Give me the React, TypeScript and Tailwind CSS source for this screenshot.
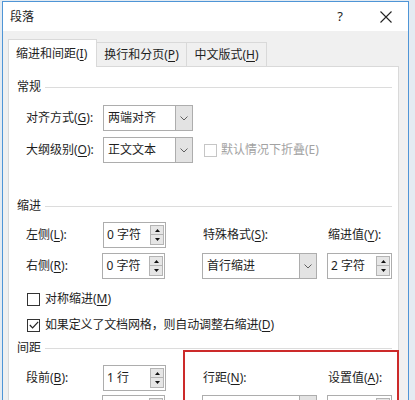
import type { ReactNode } from "react";

const font = "font-['Noto_Sans','Noto_Sans_CJK_SC',sans-serif]";

function Mn({ children }: { children: ReactNode }) {
  return <span className="underline underline-offset-2 decoration-1">{children}</span>;
}

function Heading({ text }: { text: string }) {
  return (
    <div className="flex items-center h-4 gap-[4px]">
      <span className="text-[12px] leading-4 text-[#1e1e1e]">{text}</span>
      <div className="flex-1 border-t border-[#dcdcdc]" />
    </div>
  );
}

function Select({ value, w }: { value: string; w: string }) {
  return (
    <div className={`flex h-[26px] ${w} border border-[#adadad] bg-white`}>
      <div className="flex-1 flex items-center pl-[4px] text-[12px] text-[#1e1e1e]">{value}</div>
      <div className="w-[17px] border-l border-[#adadad] bg-[#e3e3e3] flex items-center justify-center">
        <svg width="8" height="5" viewBox="0 0 8 5">
          <path d="M0.5 0.5 L4 4 L7.5 0.5" fill="none" stroke="#606060" strokeWidth="1" />
        </svg>
      </div>
    </div>
  );
}

function Spinner({ value, w }: { value: string; w: string }) {
  return (
    <div className={`flex h-[26px] ${w} border border-[#adadad] bg-white`}>
      <div className="flex-1 flex items-center pl-[3px] text-[12px] text-[#1e1e1e]">{value}</div>
      <div className="w-[15px] flex flex-col justify-center pr-[1px]">
        <div className="h-[10px] border border-[#b4b4b4] bg-[#e6e6e6] flex items-center justify-center">
          <svg width="5" height="3" viewBox="0 0 5 3"><path d="M0 3 L2.5 0 L5 3 Z" fill="#111" /></svg>
        </div>
        <div className="h-[10px] border border-t-0 border-[#b4b4b4] bg-[#e6e6e6] flex items-center justify-center">
          <svg width="5" height="3" viewBox="0 0 5 3"><path d="M0 0 L2.5 3 L5 0 Z" fill="#111" /></svg>
        </div>
      </div>
    </div>
  );
}

function Check({ checked, disabled }: { checked?: boolean; disabled?: boolean }) {
  return (
    <div
      className={`w-[13px] h-[13px] border bg-white flex items-center justify-center ${
        disabled ? "border-[#c6c6c6]" : "border-[#333333]"
      }`}
    >
      {checked && (
        <svg width="10" height="8" viewBox="0 0 10 8">
          <path d="M0.8 4 L3.6 6.8 L9.2 0.8" fill="none" stroke="#222" strokeWidth="1.2" />
        </svg>
      )}
    </div>
  );
}

export default function App() {
  return (
    <div className={`w-[415px] h-[400px] overflow-hidden bg-[#e4ebf2] pt-[1px] ${font}`}>
      <div className="ml-[2px] w-[407px] h-[420px] border border-[#4f95d6] bg-[#f0f0f0]">
        {/* title bar */}
        <div className="h-[29px] bg-white flex items-center pl-[7px] pr-[16px] text-[12px] text-[#1e1e1e]">
          <span>段落</span>
          <span className="ml-auto mr-[37px] text-[13px]">?</span>
          <svg width="12" height="12" viewBox="0 0 12 12">
            <path d="M0.5 0.5 L11.5 11.5 M11.5 0.5 L0.5 11.5" stroke="#222" strokeWidth="1.1" />
          </svg>
        </div>

        <div className="px-[5px] pt-[8px]">
          {/* tabs */}
          <div className="flex items-end relative z-10 -mb-px text-[12px] text-[#1e1e1e]">
            <div className="h-[28px] w-[89px] bg-white border border-b-0 border-[#d9d9d9] flex items-center pl-[7px]">
              缩进和间距(<Mn>I</Mn>)
            </div>
            <div className="h-[25px] w-[90px] border border-l-0 border-[#d9d9d9] flex items-center justify-center">
              换行和分页(<Mn>P</Mn>)
            </div>
            <div className="h-[25px] w-[80px] border border-l-0 border-[#d9d9d9] flex items-center justify-center">
              中文版式(<Mn>H</Mn>)
            </div>
          </div>

          {/* panel */}
          <div className="relative w-[391px] h-[360px] bg-white border border-[#d9d9d9] pl-[8px] pr-[6px] text-[12px] text-[#1e1e1e]">
            <div className="pt-[12px]">
              <Heading text="常规" />
            </div>
            <div className="ml-[9px] mt-[10px] flex items-center">
              <span className="w-[77px]">对齐方式(<Mn>G</Mn>):</span>
              <Select value="两端对齐" w="w-[90px]" />
            </div>
            <div className="ml-[9px] mt-[6px] flex items-center">
              <span className="w-[77px]">大纲级别(<Mn>O</Mn>):</span>
              <Select value="正文文本" w="w-[90px]" />
              <div className="ml-[11px] flex items-center gap-[4px] text-[#a2a2a2]">
                <Check disabled />
                <span>默认情况下折叠(E)</span>
              </div>
            </div>

            <div className="mt-[35px]">
              <Heading text="缩进" />
            </div>
            <div className="ml-[9px] mt-[8px] flex items-center">
              <span className="w-[77px]">左侧(<Mn>L</Mn>):</span>
              <Spinner value="0 字符" w="w-[63px]" />
              <span className="ml-[37px] w-[125px]">特殊格式(<Mn>S</Mn>):</span>
              <span>缩进值(<Mn>Y</Mn>):</span>
            </div>
            <div className="ml-[9px] mt-[5px] flex items-center">
              <span className="w-[77px]">右侧(<Mn>R</Mn>):</span>
              <Spinner value="0 字符" w="w-[63px]" />
              <div className="ml-[37px]">
                <Select value="首行缩进" w="w-[115px]" />
              </div>
              <div className="ml-[10px]">
                <Spinner value="2 字符" w="w-[65px]" />
              </div>
            </div>
            <div className="ml-[10px] mt-[12px] h-4 flex items-center gap-[5px]">
              <Check />
              <span>对称缩进(<Mn>M</Mn>)</span>
            </div>
            <div className="ml-[10px] mt-[10px] h-4 flex items-center gap-[5px]">
              <Check checked />
              <span className="tracking-[-0.15px]">如果定义了文档网格，则自动调整右缩进(<Mn>D</Mn>)</span>
            </div>

            <div className="mt-[7px]">
              <Heading text="间距" />
            </div>
            <div className="ml-[9px] mt-[9px] flex items-center">
              <span className="w-[77px]">段前(<Mn>B</Mn>):</span>
              <Spinner value="1 行" w="w-[63px]" />
              <span className="ml-[37px] w-[125px]">行距(<Mn>N</Mn>):</span>
              <span>设置值(<Mn>A</Mn>):</span>
            </div>
            {/* next row: only the top edge of its boxes is in view */}
            <div className="ml-[9px] mt-[4px] flex items-center">
              <span className="w-[77px]" />
              <Spinner value="" w="w-[63px]" />
              <div className="ml-[37px]">
                <Select value="" w="w-[115px]" />
              </div>
              <div className="ml-[10px]">
                <Spinner value="" w="w-[65px]" />
              </div>
            </div>

            {/* red annotation frame */}
            <div className="absolute left-[174px] top-[283px] w-[216px] h-[90px] border-2 border-[#cc2a2a]" />
          </div>
        </div>
      </div>
    </div>
  );
}
